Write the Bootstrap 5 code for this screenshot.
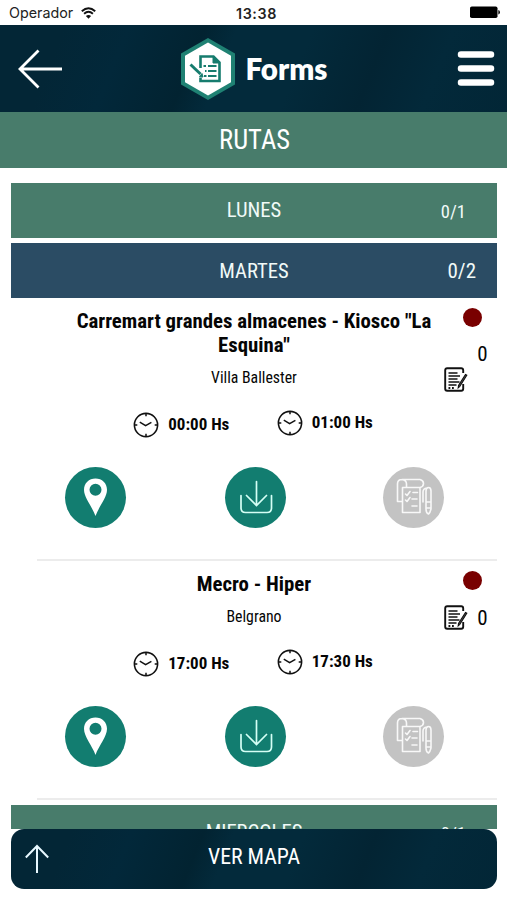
<!DOCTYPE html>
<html lang="es">
<head>
<meta charset="utf-8">
<meta name="viewport" content="width=device-width, initial-scale=1">
<title>Forms - Rutas</title>
<link href="https://cdn.jsdelivr.net/npm/bootstrap@5.3.0/dist/css/bootstrap.min.css" rel="stylesheet">
<style>
body{font-family:"Roboto Condensed",Roboto,sans-serif;color:#050505;background:#fff}
.screen{height:900px}
svg{display:block;flex:none}
.cond{white-space:nowrap}
.status{height:25px;font:14.3px/27px Inter,sans-serif;color:#222;padding:0 7px 0 9px}
.status .clock{font-weight:600;letter-spacing:.6px;padding-left:4px}
.side{flex:1 1 0}
.dark{background:linear-gradient(112deg,#032636 0 12%,#02283a 24%,#022331 38%,#032a3b 44% 58%,#032433 72%,#03293a 84%,#022636)}
.top{height:87px;padding:0 12px}
.back{margin-left:6px}
.logo{gap:10px}
.brand-name{font:800 29.5px/1 Lato,sans-serif;color:#fff;padding-top:1px}
.rutas{height:56px;background:#487c6b;font-size:27.4px;padding:1px 0 0 3px}
.rutas .cond{transform:scaleX(.97)}
.list{padding:15px 10px 0 11px;height:661px;overflow:hidden}
.day{height:55px;background:#487c6b;color:#f1faf8;font-size:20.6px;margin-bottom:5px}
.day.active{background:#2b4c64;margin-bottom:.5px;padding-top:2px}
.day.next{margin-top:5px}
.day .count{position:absolute;right:31px;top:14px;line-height:31px;font-size:18.5px}
.day.active .count{font-size:21px;right:21px;top:13px}
.stop{padding-top:10.5px}
.stop h2{font-size:20.8px;line-height:24px;font-weight:700;margin:0}
.place{height:39px;font-size:15.8px;line-height:41px}
.names{width:380px;margin-left:53px}
.state{width:53px;margin-left:-.5px}
.dot{width:19px;height:19px;border-radius:50%;background:#790000;margin-left:19px;margin-top:-1px}
.times{height:58px;font-size:17px;font-weight:700;padding-left:45.5px}
.times>div{width:143.500px;gap:9px}
.actions{height:105px;padding:0 53.5px 17.5px}
.down-disc{margin-left:2.5px}
.disc{width:61px;height:61px;border-radius:50%;background:#127d70}
.disc.off{background:#c3c3c3}
.rule{height:2px;background:#ececec;margin-left:26px}
.dock{height:60px;border-radius:13px;font-size:21.8px;left:11px;right:10px;bottom:11.5px}
.up{margin-left:14px}
.dock .cond{padding-bottom:2px}
.num{font-size:21px;line-height:24px;padding:15px 9px 1px 0}
.num.d-flex{padding-top:15.5px}
</style>
</head>
<body>
<svg width="0" height="0" class="position-absolute">
<defs>
<g id="clock" fill="none" stroke="#111"><circle cx="13" cy="13" r="11.6" stroke-width="1.6"/><path d="M13 1.5v2.8M13 21.7v2.8M1.5 13h2.8M21.7 13h2.8" stroke-width="1.5"/><path d="M6.8 10.2l5.8 3.4 5.8-3.2" stroke-width="1.5"/></g>
<g id="note" fill="none" stroke="#111"><path d="M19.2 6V3.2q0-2-2-2H3.2q-2 0-2 2v18.6q0 2 2 2h14q2 0 2-2V17" stroke-width="1.9"/><path d="M4.5 6h9M4.5 9h11.500M4.500 12h9M4.500 15h11M4.500 18h8" stroke-width="1.3"/><path d="M4.500 21h1.800M8 21h1.800" stroke-width="1.800"/><path d="M22.800 8.200L15.800 19.300l-1.600 1.500.3-2.300 7-11z" stroke-width="1.100" fill="#555"/></g>
<path id="pin" fill="#fff" fill-rule="evenodd" d="M30.500 11.500c-6.500 0-11.500 4.800-11.500 11.300 0 8 8 16.500 11.500 26.200 3.500-9.700 11.500-18.200 11.500-26.200 0-6.500-5-11.300-11.500-11.300zm0 5.300a6 6 0 1 1 0 12 6 6 0 0 1 0-12z"/>
<g id="down" fill="none" stroke="#d5fff5" stroke-width="1.700" stroke-linecap="round"><path d="M31.500 14.500v24M21.500 28.500l10 10 10-10"/><path d="M16 28.500v12.500q0 4.500 4.500 4.500h21.500q4.500 0 4.500-4.500v-12.500"/></g>
<g id="forms" fill="none" stroke="#f8f8f8" stroke-width="1.600" stroke-linejoin="round" stroke-linecap="round"><path d="M19.500 21v24.500h17.500v-25M19.500 20.500h17.500q3.500-1 3.500-4t-3.500-4H19q-4.500 0-4.500 4.500V34.500h4.500M19 12.500q4.500.5 4.500 4.500v3.500"/><path d="M22.500 27l1.500 1.500 3-4M30 25.500h4.500M22.500 33l1.500 1.500 3-4M29 32h5M29 39h5"/><path d="M43 35V24q0-3.500 2.500-3.500t2.500 3.500v18q-1 4-2.500 5-2.500-1-2.500-5V33M43 35h5M43 41h5M40 35V25q0-3.500 4-4"/></g>
</defs>
</svg>
<div class="screen position-relative overflow-hidden d-flex flex-column">
<div class="status d-flex">
 <div class="side d-flex align-items-center gap-2"><span>Operador</span>
 <svg width="15" height="12" viewBox="0 0 15 12" fill="none" stroke="#111" stroke-width="1.900"><path d="M.8 4.300Q7.500-2 14.200 4.300M3.100 6.800q4.400-3.900 8.800 0"/><path d="M7.500 11.800L4.900 9q2.600-2 5.200 0z" fill="#111" stroke="none"/></svg></div>
 <span class="clock">13:38</span>
 <div class="side d-flex justify-content-end align-items-center"><svg width="30" height="13" viewBox="0 0 30 13"><rect y=".5" width="27.500" height="11.500" rx="1.800" fill="#000"/><path d="M28.300 4q1.700.5 1.700 2.300t-1.700 2.200z" fill="#111"/></svg></div>
</div>
<header class="top dark d-flex align-items-center">
 <div class="side"><svg class="back" width="46" height="40" viewBox="0 0 46 40" fill="none" stroke="#fff" stroke-width="2.800"><path d="M44 20H2M20.500 1.500L2 20 20.500 38.500"/></svg></div>
 <div class="logo d-flex align-items-center">
 <svg width="56" height="64" viewBox="0 0 56 64"><path d="M28 1l27 15.500v31L28 63 1 47.500v-31z" fill="#1f8173"/><path d="M28 5.500l23 13.200v26.600L28 58.500 5 45.300V18.700z" fill="#fff"/><g fill="none" stroke="#167c6e"><path d="M20.500 31V19.500h13l6 6v18.500h-19v-3.500" stroke-width="2.600"/><path d="M33 19v7h7z" fill="#167c6e" stroke-width="1"/><path d="M23.500 29h2.500M28 29h8.500M25 34h1.500M28 34h8.500M24 39h2.500M28 39h8.500" stroke-width="2"/><path d="M10.500 27.500l10 9.500" stroke-width="3"/><path d="M19.500 39.500l3.500.5-1-3.500z" fill="#167c6e" stroke-width="1"/></g></svg>
 <span class="brand-name">Forms</span></div>
 <div class="side d-flex justify-content-end"><svg width="38" height="36" viewBox="0 0 38 36" stroke="#fff" stroke-width="6.500" stroke-linecap="round"><path d="M4 3.500h30M4 17.500h30M4 31.500h30"/></svg></div>
</header>
<div class="rutas text-white d-flex align-items-center justify-content-center"><span class="cond">RUTAS</span></div>
<main class="list">
 <div class="day position-relative d-flex align-items-center justify-content-center"><span class="cond">LUNES</span><span class="cond count">0/1</span></div>
 <div class="day active position-relative d-flex align-items-center justify-content-center"><span class="cond">MARTES</span><span class="cond count">0/2</span></div>
 <section class="stop">
  <div class="d-flex">
   <div class="names text-center"><h2><span class="cond">Carremart grandes almacenes - Kiosco "La<br>Esquina"</span></h2><div class="place"><span class="cond">Villa Ballester</span></div></div>
   <div class="state"><div class="dot"></div><div class="num text-end"><span class="cond">0</span></div><svg width="24" height="25" viewBox="0 0 24 25"><use href="#note"/></svg></div>
  </div>
  <div class="times d-flex align-items-center justify-content-center"><div class="d-flex align-items-center"><svg width="26" height="26"><use href="#clock"/></svg><span class="cond">00:00 Hs</span></div><div class="d-flex align-items-center mb-1"><svg width="26" height="26"><use href="#clock"/></svg><span class="cond">01:00 Hs</span></div></div>
  <div class="actions d-flex align-items-center justify-content-between"><div class="disc"><svg width="61" height="61"><use href="#pin"/></svg></div><div class="disc down-disc"><svg width="61" height="61"><use href="#down"/></svg></div><div class="disc off"><svg width="61" height="61"><use href="#forms"/></svg></div></div>
  <div class="rule"></div>
 </section>
 <section class="stop">
  <div class="d-flex">
   <div class="names text-center"><h2><span class="cond">Mecro - Hiper</span></h2><div class="place"><span class="cond">Belgrano</span></div></div>
   <div class="state"><div class="dot"></div><div class="num d-flex align-items-center justify-content-between"><svg width="24" height="25" viewBox="0 0 24 25"><use href="#note"/></svg><span class="cond">0</span></div></div>
  </div>
  <div class="times d-flex align-items-center justify-content-center"><div class="d-flex align-items-center"><svg width="26" height="26"><use href="#clock"/></svg><span class="cond">17:00 Hs</span></div><div class="d-flex align-items-center mb-1"><svg width="26" height="26"><use href="#clock"/></svg><span class="cond">17:30 Hs</span></div></div>
  <div class="actions d-flex align-items-center justify-content-between"><div class="disc"><svg width="61" height="61"><use href="#pin"/></svg></div><div class="disc down-disc"><svg width="61" height="61"><use href="#down"/></svg></div><div class="disc off"><svg width="61" height="61"><use href="#forms"/></svg></div></div>
  <div class="rule"></div>
 </section>
 <div class="day next position-relative d-flex align-items-center justify-content-center"><span class="cond">MIERCOLES</span><span class="cond count">0/1</span></div>
</main>
<footer class="dock dark position-absolute text-white d-flex align-items-center"><div class="side"><svg class="up" width="24" height="29" viewBox="0 0 24 29" fill="none" stroke="#e8f8ff" stroke-width="2"><path d="M12 29V2M.8 13.500L12 2l11.200 11.500"/></svg></div><span class="cond">VER MAPA</span><div class="side"></div></footer>
</div>
<script src="https://cdn.jsdelivr.net/npm/bootstrap@5.3.0/dist/js/bootstrap.bundle.min.js"></script>
</body>
</html>
